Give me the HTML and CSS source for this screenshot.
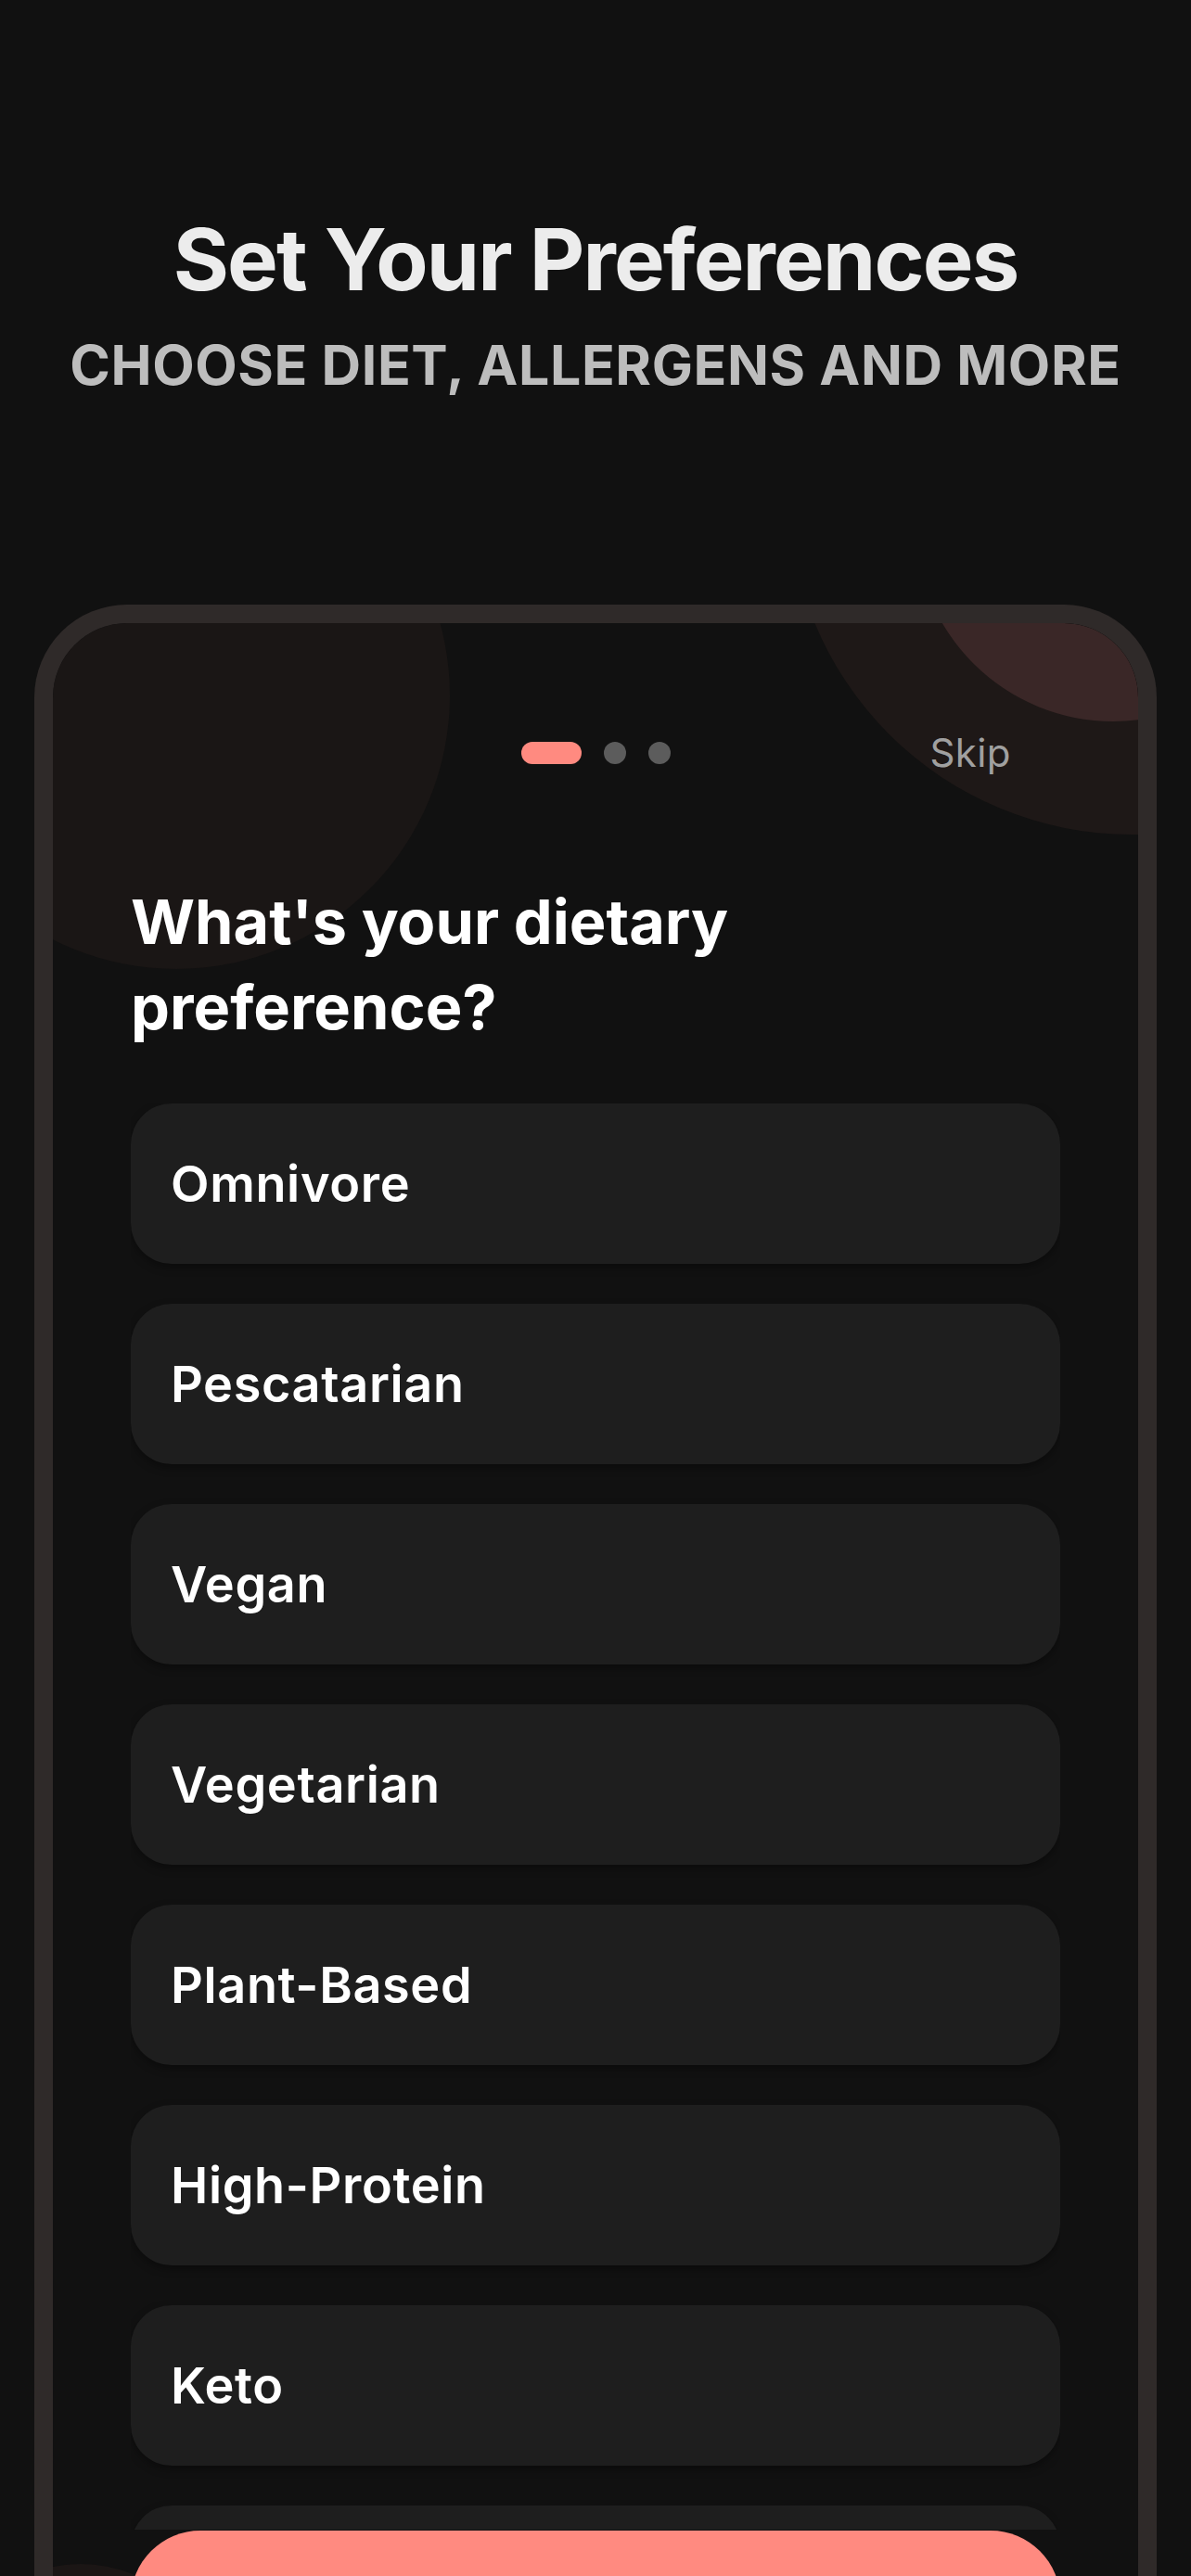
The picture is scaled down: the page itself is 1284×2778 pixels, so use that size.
FILE: index.html
```html
<!DOCTYPE html>
<html lang="en">
<head>
<meta charset="utf-8">
<title>Set Your Preferences</title>
<link rel="stylesheet" href="styles.css">
</head>
<body>
<div class="page">
  <header class="hero">
    <h1 class="title">Set Your Preferences</h1>
    <p class="subtitle">CHOOSE DIET, ALLERGENS AND MORE</p>
  </header>
  <div class="frame">
    <div class="screen">
      <div class="blob blob-tl"></div>
      <div class="blob blob-tr"></div>
      <div class="blob blob-tr-small"></div>
      <div class="blob blob-bl"></div>
      <div class="topbar">
        <div class="spacer"></div>
        <div class="dots">
          <span class="dot dot-active"></span>
          <span class="dot"></span>
          <span class="dot"></span>
        </div>
        <button class="skip">Skip</button>
      </div>
      <div class="content">
        <h2 class="question">What's your dietary preference?</h2>
        <div class="options">
          <div class="option">Omnivore</div>
          <div class="option">Pescatarian</div>
          <div class="option">Vegan</div>
          <div class="option">Vegetarian</div>
          <div class="option">Plant-Based</div>
          <div class="option">High-Protein</div>
          <div class="option">Keto</div>
          <div class="option" aria-label="Paleo"></div>
        </div>
        <button class="cta" aria-label="Continue"></button>
      </div>
    </div>
  </div>
</div>
</body>
</html>
```
FILE: styles.css
```css
* { box-sizing: border-box; }
html, body {
  margin: 0;
  padding: 0;
  background: #111111;
}
body {
  font-family: Inter, "Noto Sans", "Liberation Sans", sans-serif;
  height: 2778px;
  overflow: hidden;
}
.page {
  padding-top: 234px;
}
.hero {
  text-align: center;
}
.title {
  margin: 0;
  font-size: 92px;
  line-height: 92px;
  font-weight: 700;
  color: #ececec;
  letter-spacing: -0.02em;
}
.subtitle {
  margin: 38px 0 0;
  font-size: 59px;
  line-height: 59px;
  font-weight: 700;
  color: #bdbdbd;
  letter-spacing: 0.01em;
}
.frame {
  margin: 229px 37px 0;
  height: 2300px;
  border: 20px solid #2f2a29;
  border-bottom: none;
  border-radius: 100px 100px 0 0;
  background: #111111;
  overflow: hidden;
}
.screen {
  position: relative;
  height: 100%;
  overflow: hidden;
  border-radius: 80px 80px 0 0;
}
.blob {
  position: absolute;
  border-radius: 50%;
}
.blob-tl {
  left: -162px;
  top: -217px;
  width: 590px;
  height: 590px;
  background: #1a1615;
}
.blob-tr {
  left: 793px;
  top: -512px;
  width: 740px;
  height: 740px;
  background: #1e1817;
}
.blob-tr-small {
  left: 930px;
  top: -320px;
  width: 426px;
  height: 426px;
  background: #3a2727;
}
.blob-bl {
  left: -120px;
  top: 2093px;
  width: 300px;
  height: 300px;
  background: #1b1615;
}
.topbar {
  position: relative;
  display: grid;
  grid-template-columns: 1fr auto 1fr;
  align-items: center;
  height: 40px;
  margin-top: 120px;
}
.dots {
  display: flex;
  gap: 24px;
  align-items: center;
}
.dot {
  width: 24px;
  height: 24px;
  border-radius: 12px;
  background: #5c5c5c;
}
.dot-active {
  width: 65px;
  background: #ff8a80;
}
.skip {
  justify-self: end;
  margin-right: 137px;
  padding: 0;
  border: none;
  background: none;
  font-family: inherit;
  font-size: 42px;
  line-height: 40px;
  letter-spacing: 0.01em;
  color: #a0a0a0;
}
.content {
  position: relative;
  padding: 0 84px;
}
.question {
  margin: 116px 0 0;
  font-size: 66.6px;
  line-height: 92px;
  font-weight: 700;
  color: #ffffff;
  width: 740px;
}
.options {
  margin-top: 58px;
  height: 1538px;
  overflow: hidden;
  display: flex;
  flex-direction: column;
  gap: 43px;
}
.option {
  flex: none;
  height: 173px;
  border-radius: 44px;
  background: #1e1e1e;
  box-shadow: 0 4px 10px rgba(0, 0, 0, 0.35);
  display: flex;
  align-items: center;
  padding-left: 43px;
  font-size: 54px;
  font-weight: 600;
  letter-spacing: 0.012em;
  color: #ffffff;
}
.cta {
  display: block;
  width: 100%;
  height: 150px;
  margin-top: 1px;
  border: none;
  border-radius: 75px;
  background: #ff8a80;
}
```
